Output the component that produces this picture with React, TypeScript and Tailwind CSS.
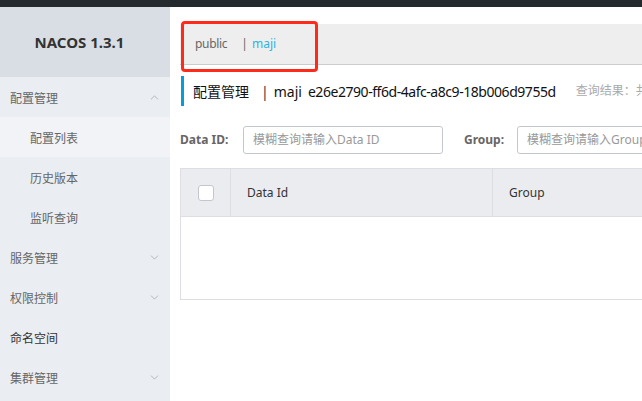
import { ChevronDown, ChevronUp } from 'lucide-react';

const font = "font-['Noto_Sans','Noto_Sans_CJK_SC',sans-serif]";

const MenuGroup = ({ label, open }: { label: string; open?: boolean }) => (
    <div className="flex items-center justify-between h-10 pt-[4px] pl-[10px] pr-[9px] text-[12px] text-[#666]">
        <span>{label}</span>
        {open ? (
            <ChevronUp size={13} strokeWidth={1.2} className="text-[#999] -mt-[4px]" />
        ) : (
            <ChevronDown size={13} strokeWidth={1.2} className="text-[#999] -mt-[4px]" />
        )}
    </div>
);

const SubItem = ({ label, active }: { label: string; active?: boolean }) => (
    <div className={`flex items-center h-10 pt-[4px] pl-[30px] text-[12px] text-[#666] ${active ? 'bg-[#f2f3f7]' : ''}`}>
        {label}
    </div>
);

const App = () => {
    return (
        <div className={`w-[642px] h-[401px] flex flex-col overflow-hidden bg-white ${font}`}>
            {/* Top bar */}
            <div className="h-[7px] bg-[#252a2f] shrink-0" />

            <div className="flex flex-1 min-h-0">
                {/* Sidebar */}
                <div className="w-[170px] shrink-0 bg-[#eaedf1]">
                    <div className="h-[70px] bg-[#d9dee4] flex items-center justify-center pr-[11px] text-[15px] font-bold text-[#333]">
                        NACOS 1.3.1
                    </div>
                    <MenuGroup label="配置管理" open />
                    <SubItem label="配置列表" active />
                    <SubItem label="历史版本" />
                    <SubItem label="监听查询" />
                    <MenuGroup label="服务管理" />
                    <MenuGroup label="权限控制" />
                    <div className="flex items-center h-10 pt-[4px] pl-[10px] text-[12px] text-[#333]">命名空间</div>
                    <MenuGroup label="集群管理" />
                </div>

                {/* Main */}
                <div className="flex-1 min-w-0 overflow-hidden pl-[10px]">
                    <div className="w-[900px]">
                        {/* Namespace bar */}
                        <div className="relative mt-[17px] h-[41px] bg-[#eeeeee] border-b border-[#cccccc] flex items-center pl-[15px] text-[12px]">
                            <span className="text-[#666] tracking-[-0.3px]">public</span>
                            <span className="ml-[14px] text-[#666]">|</span>
                            <span className="ml-[4px] text-[#2cb5de]">maji</span>
                            <div className="absolute left-[1px] top-[-3px] w-[137px] h-[51px] border-[3px] border-[#ff2a1a] rounded-[4px]" />
                        </div>

                        {/* Title */}
                        <div className="mt-[11px] h-[30px] flex items-center border-l-[3px] border-[#0a9ad7] ml-[1px] pl-[9px] text-[#111]">
                            <span className="text-[14px]">配置管理</span>
                            <span className="text-[14px] ml-[12px] text-[#333]">|</span>
                            <span className="text-[14px] ml-[5px]">maji</span>
                            <span className="text-[14px] ml-[6px] tracking-[-0.45px]">e26e2790-ff6d-4afc-a8c9-18b006d9755d</span>
                            <span className="text-[12px] text-[#aaa] ml-[20px]">查询结果：共 0 条满足要求的配置。</span>
                        </div>

                        {/* Filters */}
                        <div className="mt-[20px] flex items-center h-[28px]">
                            <span className="text-[12px] font-bold text-[#666] w-[63px]">Data ID:</span>
                            <div className="w-[200px] h-[28px] border border-[#c4c6cf] rounded-[3px] flex items-center pl-[9px] text-[12px] text-[#999]">
                                模糊查询请输入Data ID
                            </div>
                            <span className="ml-[21px] text-[12px] font-bold text-[#666] w-[53px]">Group:</span>
                            <div className="w-[200px] h-[28px] border border-[#c4c6cf] rounded-[3px] flex items-center pl-[9px] text-[12px] text-[#999]">
                                模糊查询请输入Group
                            </div>
                        </div>

                        {/* Table */}
                        <div className="mt-[14px] border border-[#dcdee3]">
                            <div className="flex h-[48px] bg-[#ebecf0] border-b border-[#dcdee3] text-[12px] text-[#333]">
                                <div className="w-[50px] flex items-center justify-center border-r border-[#dcdee3]">
                                    <div className="w-4 h-4 bg-white border border-[#c4c6cf] rounded-[3px]" />
                                </div>
                                <div className="w-[262px] flex items-center pl-[16px] border-r border-[#dcdee3]">Data Id</div>
                                <div className="flex-1 flex items-center pl-[16px]">Group</div>
                            </div>
                            <div className="h-[82px]" />
                        </div>
                    </div>
                </div>
            </div>
        </div>
    );
};

export default App;
